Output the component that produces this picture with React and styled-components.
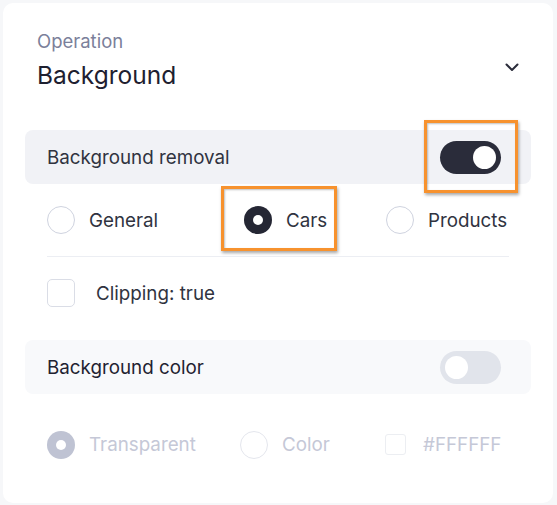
import React from 'react'
import styled, { createGlobalStyle } from 'styled-components'

const GlobalStyle = createGlobalStyle`
  html, body { margin: 0; padding: 0; background: #f6f7f9; }
  body { padding: 3px; font-family: Inter, "Noto Sans", sans-serif; color: #2e3140; }
  * { box-sizing: border-box; }
`

// Card
const Card = styled.div`
  width: 550px;
  height: 500px;
  background: #fff;
  border-radius: 10px;
  padding: 27px 22px 0;
`

// Header
const Header = styled.div`
  display: flex;
  justify-content: space-between;
  align-items: flex-start;
  padding: 0 12px;
`
const Label = styled.div`
  font-size: 18.5px;
  line-height: 22px;
  color: #7b809a;
`
const Title = styled.div`
  margin-top: 8px;
  font-size: 24.5px;
  line-height: 30px;
  color: #1e2030;
`
const Chevron = styled.svg`
  margin-top: 33px;
  width: 14px;
  height: 9px;
`

// Toggle row
const ToggleRow = styled.div`
  display: flex;
  align-items: center;
  justify-content: space-between;
  height: 54px;
  padding: 0 30px 0 22px;
  border-radius: 8px;
  background: ${p => (p.$muted ? '#f8f9fb' : '#f1f2f6')};
  margin-top: ${p => p.$top || 0}px;
  font-size: 18.8px;
  color: ${p => (p.$muted ? '#1f2231' : '#30333f')};
`
const Switch = styled.div`
  position: relative;
  width: 61px;
  height: 33px;
  border-radius: 17px;
  padding: 5px;
  display: flex;
  justify-content: ${p => (p.$on ? 'flex-end' : 'flex-start')};
  background: ${p => (p.$on ? '#2a2c3a' : '#e1e4eb')};
  &::after {
    content: '';
    width: 23px;
    height: 23px;
    border-radius: 50%;
    background: #fff;
  }
`

// Highlight annotation (lies over content)
const Highlight = styled.div`
  position: absolute;
  top: ${p => p.$t}px;
  right: ${p => p.$r}px;
  bottom: ${p => p.$b}px;
  left: ${p => p.$l}px;
  border: 3px solid #f7922e;
  box-shadow: 1px 2px 3px rgba(0, 0, 0, 0.35), inset 1px 1px 2px rgba(0, 0, 0, 0.25);
  pointer-events: none;
`

// Options
const Options = styled.div`
  display: grid;
  grid-template-columns: ${p => p.$cols};
  align-items: center;
  justify-items: start;
  height: ${p => p.$h}px;
  padding: 0 22px;
`
const Option = styled.label`
  position: relative;
  display: flex;
  align-items: center;
  gap: ${p => p.$gap || 14}px;
  font-size: 18.8px;
  color: ${p => (p.$disabled ? '#c5c8d7' : '#30333f')};
`
const Radio = styled.span`
  width: 28px;
  height: 28px;
  border-radius: 50%;
  flex: none;
  display: flex;
  align-items: center;
  justify-content: center;
  border: ${p => (p.$checked ? 'none' : `1.5px solid ${p.$disabled ? '#e4e6ed' : '#cfd3df'}`)};
  background: ${p => (p.$checked ? (p.$disabled ? '#bfc3d3' : '#252734') : '#fff')};
  &::after {
    content: '';
    display: ${p => (p.$checked ? 'block' : 'none')};
    width: 10px;
    height: 10px;
    border-radius: 50%;
    background: #fff;
  }
`
const Checkbox = styled.span`
  flex: none;
  width: ${p => p.$size || 28}px;
  height: ${p => p.$size || 28}px;
  border-radius: ${p => (p.$size ? 3 : 5)}px;
  border: 1.5px solid ${p => (p.$disabled ? '#eceef2' : '#dadde6')};
`
const Divider = styled.div`
  height: 1px;
  margin: 0 22px;
  background: #eceef3;
`

export default function App() {
  return (
    <>
      <GlobalStyle />
      <Card>
        <Header>
          <div>
            <Label>Operation</Label>
            <Title>Background</Title>
          </div>
          <Chevron viewBox="0 0 14 9">
            <polyline points="1.5,1.5 7,7 12.5,1.5" fill="none" stroke="#2a2c3a" strokeWidth="2" strokeLinecap="round" strokeLinejoin="round" />
          </Chevron>
        </Header>

        <ToggleRow $top={40}>
          Background removal
          <Switch $on>
            <Highlight $t={-21} $r={-17} $b={-19} $l={-16} />
          </Switch>
        </ToggleRow>

        <Options $cols="197px 142px 1fr" $h={72}>
          <Option><Radio />General</Option>
          <Option>
            <Radio $checked />Cars
            <Highlight $t={-20} $r={-10} $b={-17} $l={-23} />
          </Option>
          <Option><Radio />Products</Option>
        </Options>
        <Divider />
        <Options $cols="1fr" $h={72}>
          <Option $gap={21}><Checkbox />Clipping: true</Option>
        </Options>

        <ToggleRow $muted $top={11}>
          Background color
          <Switch />
        </ToggleRow>

        <Options $cols="193px 145px 1fr" $h={101}>
          <Option $disabled><Radio $checked $disabled />Transparent</Option>
          <Option $disabled><Radio $disabled />Color</Option>
          <Option $disabled $gap={17}><Checkbox $size={21} $disabled />#FFFFFF</Option>
        </Options>
      </Card>
    </>
  )
}
